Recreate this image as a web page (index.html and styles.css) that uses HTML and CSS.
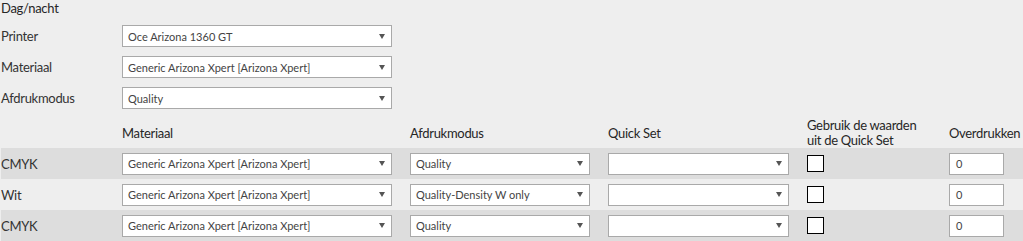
FILE: index.html
```html
<!DOCTYPE html>
<html lang="nl">
<head>
<meta charset="utf-8">
<title>Dag/nacht</title>
<link rel="stylesheet" href="styles.css">
</head>
<body>
<div class="page">
  <div class="title">Dag/nacht</div>
  <div class="form">
    <div class="form-row">
      <span class="label">Printer</span>
      <div class="select w-main"><span class="val">Oce Arizona 1360 GT</span><span class="arrow"></span></div>
    </div>
    <div class="form-row">
      <span class="label">Materiaal</span>
      <div class="select w-main"><span class="val">Generic Arizona Xpert [Arizona Xpert]</span><span class="arrow"></span></div>
    </div>
    <div class="form-row">
      <span class="label">Afdrukmodus</span>
      <div class="select w-main"><span class="val">Quality</span><span class="arrow"></span></div>
    </div>
  </div>
  <div class="table">
    <div class="row head">
      <span class="cell"></span>
      <span class="cell">Materiaal</span>
      <span class="cell">Afdrukmodus</span>
      <span class="cell">Quick Set</span>
      <span class="cell">Gebruik de waarden<br>uit de Quick Set</span>
      <span class="cell">Overdrukken</span>
    </div>
    <div class="row dark">
      <span class="cell label">CMYK</span>
      <div class="cell"><div class="select w-main"><span class="val">Generic Arizona Xpert [Arizona Xpert]</span><span class="arrow"></span></div></div>
      <div class="cell"><div class="select w-mode"><span class="val">Quality</span><span class="arrow"></span></div></div>
      <div class="cell"><div class="select w-qs"><span class="val"></span><span class="arrow"></span></div></div>
      <div class="cell"><span class="check"></span></div>
      <div class="cell"><span class="input">0</span></div>
    </div>
    <div class="row">
      <span class="cell label">Wit</span>
      <div class="cell"><div class="select w-main"><span class="val">Generic Arizona Xpert [Arizona Xpert]</span><span class="arrow"></span></div></div>
      <div class="cell"><div class="select w-mode"><span class="val">Quality-Density W only</span><span class="arrow"></span></div></div>
      <div class="cell"><div class="select w-qs"><span class="val"></span><span class="arrow"></span></div></div>
      <div class="cell"><span class="check"></span></div>
      <div class="cell"><span class="input">0</span></div>
    </div>
    <div class="row dark">
      <span class="cell label">CMYK</span>
      <div class="cell"><div class="select w-main"><span class="val">Generic Arizona Xpert [Arizona Xpert]</span><span class="arrow"></span></div></div>
      <div class="cell"><div class="select w-mode"><span class="val">Quality</span><span class="arrow"></span></div></div>
      <div class="cell"><div class="select w-qs"><span class="val"></span><span class="arrow"></span></div></div>
      <div class="cell"><span class="check"></span></div>
      <div class="cell"><span class="input">0</span></div>
    </div>
  </div>
</div>
</body>
</html>
```
FILE: styles.css
```css
html, body {
  margin: 0;
  padding: 0;
  background: #eeeeee;
}
body {
  font-family: Lato, "Liberation Sans", sans-serif;
  color: #333333;
  font-size: 13px;
  letter-spacing: -0.3px;
}
.page {
  padding-left: 1px;
  width: 1022px;
  overflow: hidden;
}
.title {
  height: 25px;
  line-height: 17px;
  color: #262626;
}
.form {
  display: flex;
  flex-direction: column;
}
.form-row {
  display: flex;
  height: 31px;
  align-items: flex-start;
}
.form-row .label {
  width: 121px;
  line-height: 22px;
}
.select {
  box-sizing: border-box;
  height: 22px;
  border: 1px solid #a9a9a9;
  background: #ffffff;
  display: flex;
  align-items: center;
  justify-content: space-between;
  padding: 0 6px 0 5px;
  font-size: 11px;
  letter-spacing: 0;
  color: #444444;
}
.w-main { width: 270px; }
.w-mode { width: 180px; }
.w-qs { width: 181px; }
.arrow {
  width: 0;
  height: 0;
  border-left: 3px solid transparent;
  border-right: 3px solid transparent;
  border-top: 5px solid #555555;
}
.row {
  display: grid;
  grid-template-columns: 121px 288px 198px 199px 142px 1fr;
  height: 31px;
  align-items: center;
}
.row.head {
  height: 30px;
  color: #262626;
}
.row.dark {
  background: #dddddd;
}
.head .cell {
  line-height: 15px;
}
.cell {
  display: flex;
  align-items: center;
  white-space: nowrap;
}
.row .label {
  line-height: 22px;
}
.check {
  box-sizing: border-box;
  width: 17px;
  height: 17px;
  border: 1px solid #000000;
  background: #ffffff;
}
.input {
  box-sizing: border-box;
  width: 55px;
  height: 22px;
  border: 1px solid #a9a9a9;
  background: #ffffff;
  padding-left: 6px;
  font-size: 11px;
  letter-spacing: 0;
  color: #444444;
  line-height: 20px;
}
```
